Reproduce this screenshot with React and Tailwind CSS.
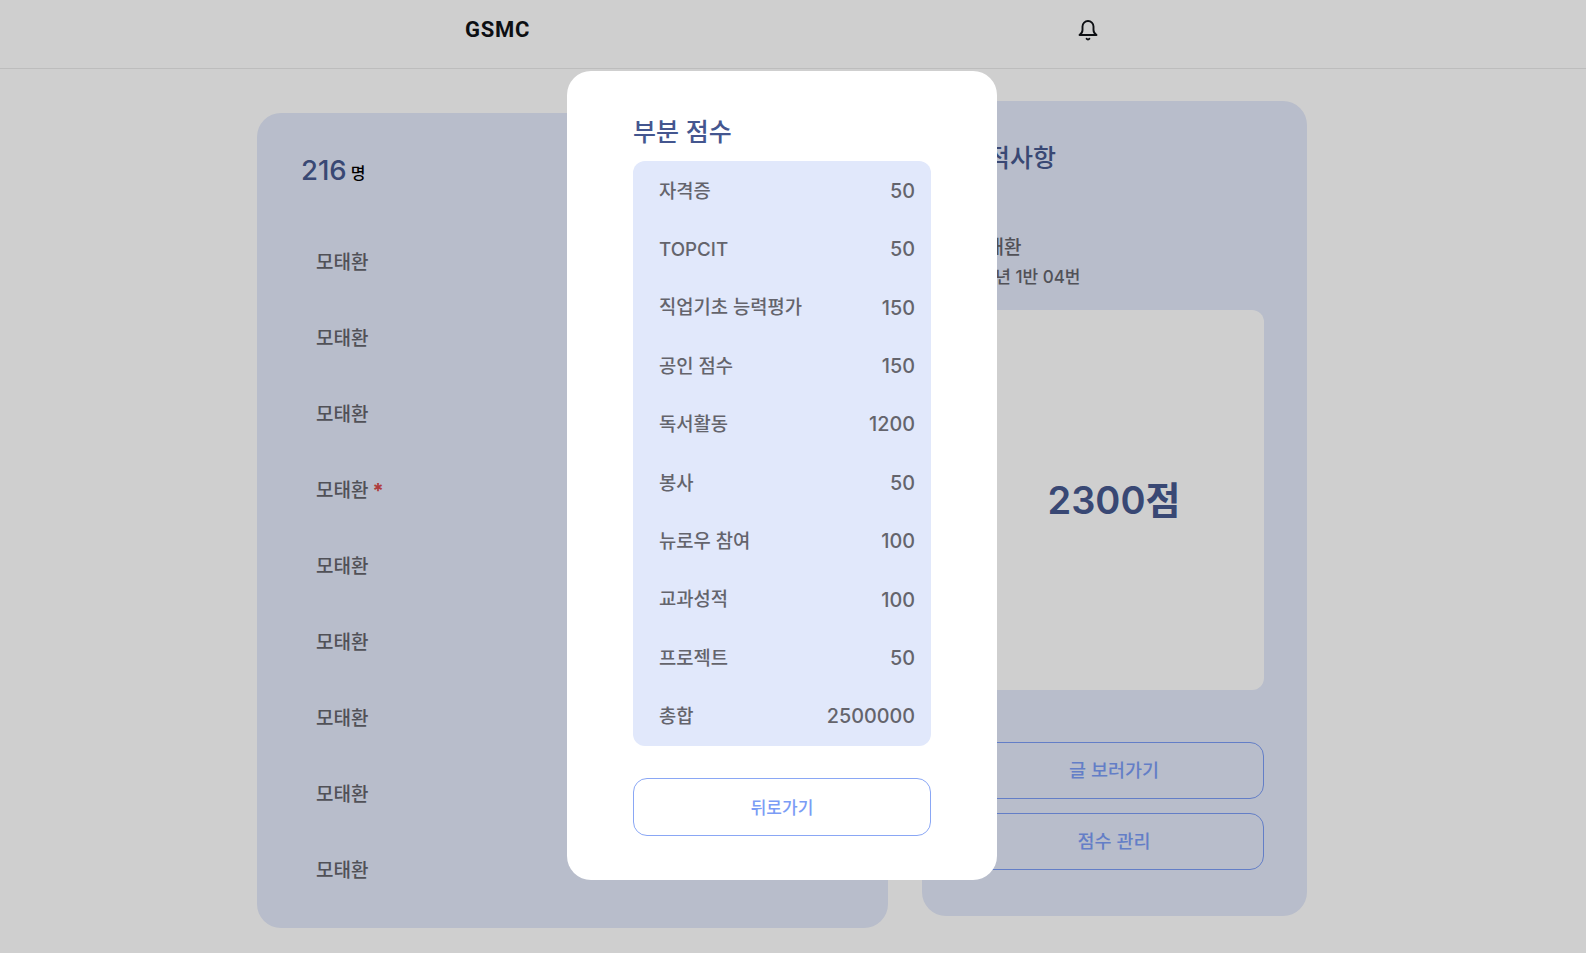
import React from 'react';

const FONT = "font-['Inter','Noto_Sans_CJK_KR',sans-serif]";

const students = ['모태환', '모태환', '모태환', '모태환', '모태환', '모태환', '모태환', '모태환', '모태환'];

const scores = [
  ['자격증', '50'],
  ['TOPCIT', '50'],
  ['직업기초 능력평가', '150'],
  ['공인 점수', '150'],
  ['독서활동', '1200'],
  ['봉사', '50'],
  ['뉴로우 참여', '100'],
  ['교과성적', '100'],
  ['프로젝트', '50'],
  ['총합', '2500000'],
];

const BellIcon = () => (
  <svg width="24" height="24" viewBox="0 0 24 24" fill="none" stroke="#111318" strokeWidth="1.9" strokeLinecap="round" strokeLinejoin="round">
    <path d="M12 3a5.5 5.5 0 0 0-5.5 5.5V12c0 2.5-1.5 4-3 5h17c-1.5-1-3-2.5-3-5V8.5A5.5 5.5 0 0 0 12 3Z" />
    <path d="M10.6 20.8a1.7 1.7 0 0 0 2.8 0" />
  </svg>
);

const App = () => {
  return (
    <div className={`relative h-[953px] overflow-hidden bg-white ${FONT}`}>
      <header className="h-[69px] border-b border-[#e9e9e9] flex items-center pb-[9px]">
        <span className="ml-[465px] font-['Roboto',sans-serif] text-[22px] font-bold text-[#111318] tracking-[0.7px]">GSMC</span>
        <span className="ml-[546px] flex"><BellIcon /></span>
      </header>

      <main className="flex items-start gap-[34px] pl-[257px]">
        <section className="mt-[44px] w-[631px] h-[815px] rounded-[24px] bg-[#e3e9fa] pt-[37px] pl-[44px]">
          <div className="flex items-center gap-[4px]">
            <span className="text-[27.5px] font-[550] text-[#47598f]">216</span>
            <span className="mt-[4px] text-[16px] font-medium text-black">명</span>
          </div>
          <ul className="mt-[34px] pl-[15px]">
            {students.map((name, i) => (
              <li key={i} className="h-[76px] flex items-center text-[19px] font-medium text-[#64646c]">
                {name}
                {i === 3 && <span className="ml-[4px] text-[20px] font-bold text-[#d84a4a]">*</span>}
              </li>
            ))}
          </ul>
        </section>

        <section className="mt-[32px] w-[385px] h-[815px] rounded-[24px] bg-[#e3e9fa] pt-[39px] pl-[42px] pr-[43px]">
          <h2 className="text-[25px] leading-[36px] font-medium text-[#47598f]">인적사항</h2>
          <div className="mt-[57px] pl-[5px] font-medium text-[#64646c]">
            <p className="text-[19px] leading-[29px]">모태환</p>
            <p className="text-[17px] leading-[30px]">3학년 1반 04번</p>
          </div>
          <div className="mt-[18px] h-[380px] rounded-[12px] bg-white flex items-center justify-center">
            <span className="text-[38px] font-semibold text-[#47598f]">2300점</span>
          </div>
          <button className="mt-[52px] w-full h-[57px] rounded-[14px] border border-[#7b9cf5] text-[18.5px] font-medium text-[#7b9cf5]">글 보러가기</button>
          <button className="mt-[14px] w-full h-[57px] rounded-[14px] border border-[#7b9cf5] text-[18.5px] font-medium text-[#7b9cf5]">점수 관리</button>
        </section>
      </main>

      <div className="absolute inset-0 bg-black/[0.19]" />

      <div className="absolute left-[567px] top-[71px] w-[430px] h-[809px] rounded-[24px] bg-white pt-[43px] px-[66px]">
        <h2 className="text-[25px] leading-[36px] font-medium text-[#44568f]">부분 점수</h2>
        <ul className="mt-[11px] rounded-[12px] bg-[#e1e8fb] pt-[1.5px] pl-[26px] pr-[16px] h-[585px]">
          {scores.map(([label, value]) => (
            <li key={label} className="h-[58.4px] flex items-center justify-between font-medium text-[#64646c]">
              <span className="text-[18.75px]">{label}</span>
              <span className="text-[19.8px]">{value}</span>
            </li>
          ))}
        </ul>
        <button className="mt-[32px] pt-[3px] w-full h-[58px] rounded-[14px] border-[1.5px] border-[#8aa7f5] text-[17px] font-medium text-[#7b9cf5]">뒤로가기</button>
      </div>
    </div>
  );
};

export default App;
